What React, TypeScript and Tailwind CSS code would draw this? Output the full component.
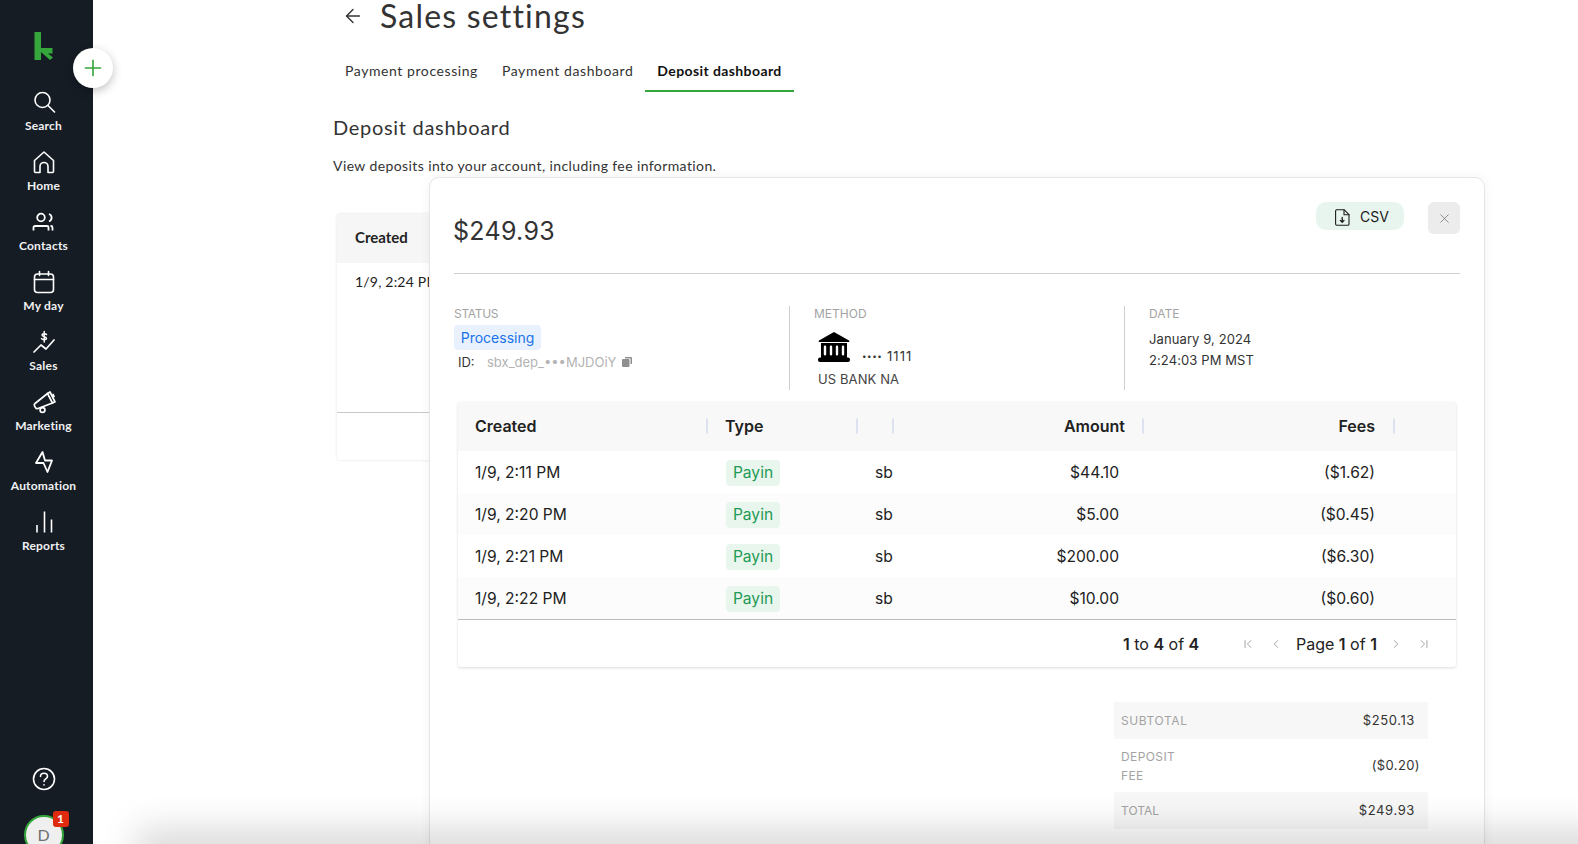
import React from 'react';
import { ArrowLeft, ChevronLeft, ChevronRight, ChevronFirst, ChevronLast, Plus, X } from 'lucide-react';

const lato = 'font-["Lato","Liberation_Sans",sans-serif]';
const inter = 'font-["Inter","Liberation_Sans",sans-serif]';

const SearchIcon = () => (
  <svg width="24" height="24" viewBox="0 0 24 24" fill="none" stroke="white" strokeWidth="1.6" strokeLinecap="round">
    <circle cx="10.5" cy="10" r="7.5" />
    <path d="M16 15.5l6.5 6.5" />
  </svg>
);
const HomeIcon = () => (
  <svg width="24" height="24" viewBox="0 0 24 24" fill="none" stroke="white" strokeWidth="1.6" strokeLinejoin="round">
    <path d="M2.5 10.5L12 2l9.5 8.5V21.5a1 1 0 0 1-1 1H16v-6a4 4 0 0 0-8 0v6H3.500a1 1 0 0 1-1-1z" />
  </svg>
);
const ContactsIcon = () => (
  <svg width="24" height="24" viewBox="0 0 24 24" fill="none" stroke="white" strokeWidth="1.8">
    <circle cx="9" cy="7.500" r="3.800" />
    <path d="M1.500 20.500v-3a1.500 1.500 0 0 1 1.500-1.500h12a1.500 1.500 0 0 1 1.500 1.500v3" />
    <path d="M17 4a4 4 0 0 1 0 7.500" />
    <path d="M18.500 16h.5a1.500 1.500 0 0 1 1.500 1.500v3" />
  </svg>
);
const CalendarIcon = () => (
  <svg width="24" height="24" viewBox="0 0 24 24" fill="none" stroke="white" strokeWidth="1.6" strokeLinecap="round">
    <rect x="2.500" y="4" width="19" height="18.500" rx="3" />
    <path d="M2.500 9.500h19M7.500 1.500v4M16.500 1.500v4" />
  </svg>
);
const SalesIcon = () => (
  <svg width="24" height="24" viewBox="0 0 24 24" fill="none" stroke="white" strokeWidth="1.7" strokeLinecap="round" strokeLinejoin="round">
    <path d="M2 22l7-7 5 4 8-9" />
    <path d="M14.500 4.500c-.6-1-4.400-1.300-4.500.6-.1 1.900 4.700 1.300 4.500 3.300-.2 1.800-4 1.500-5 .2M12.200 1.500v10.500" strokeWidth="1.500" />
  </svg>
);
const MarketingIcon = () => (
  <svg width="24" height="24" viewBox="0 0 24 24" fill="none" stroke="white" strokeWidth="1.7" strokeLinecap="round" strokeLinejoin="round">
    <path d="M3 13.500L15.500 3.500 20.500 13 6 18.500a2 2 0 0 1-2.500-.9l-1-1.800a1.800 1.800 0 0 1 .5-2.300z" />
    <path d="M15.500 3.500l2.500-1.500 5 9.800-2.500 1.200" />
    <circle cx="10.500" cy="20" r="2.400" />
    <path d="M21 4.500l1 2" />
  </svg>
);
const BoltIcon = () => (
  <svg width="24" height="24" viewBox="0 0 24 24" fill="none" stroke="white" strokeWidth="1.8" strokeLinejoin="round">
    <path d="M10.500 2L4 13h7.500L15.500 22 20 10.500h-7z" />
  </svg>
);
const ReportsIcon = () => (
  <svg width="24" height="24" viewBox="0 0 24 24" fill="none" stroke="white" strokeWidth="1.6">
    <path d="M5 15v7.500M12.500 1.500v21M19.500 9.500v13" />
  </svg>
);
const HelpIcon = () => (
  <svg width="24" height="24" viewBox="0 0 24 24" fill="none" stroke="white" strokeWidth="1.6" strokeLinecap="round">
    <circle cx="12" cy="12" r="10.500" />
    <path d="M8.500 9.500c0-2 1.500-3.200 3.500-3.200s3.500 1.300 3.500 3c0 2.500-3.500 2.700-3.500 5.200" />
    <path d="M12 17.800v.2" />
  </svg>
);
const BankIcon = () => (
  <svg width="32" height="30" viewBox="0 0 32 30" fill="black">
    <path d="M16 0L31 8.500a1 1 0 0 1 0 1.500H1a1 1 0 0 1 0-1.500z" />
    <path fillRule="evenodd" d="M3 11h26v15H3zM7 13.500a1.200 1.200 0 0 0-1.200 1.200v7.600a1.200 1.200 0 0 0 2.400 0v-7.600A1.200 1.200 0 0 0 7 13.500zm6 0a1.200 1.200 0 0 0-1.200 1.200v7.600a1.200 1.200 0 0 0 2.400 0v-7.600a1.200 1.200 0 0 0-1.200-1.200zm6 0a1.200 1.200 0 0 0-1.200 1.200v7.600a1.200 1.200 0 0 0 2.400 0v-7.600a1.200 1.200 0 0 0-1.200-1.200zm6 0a1.200 1.200 0 0 0-1.200 1.200v7.600a1.200 1.200 0 0 0 2.400 0v-7.600a1.200 1.200 0 0 0-1.200-1.200z" />
    <rect x="0" y="25.500" width="32" height="4.500" rx="2" />
  </svg>
);
const FileDownIcon = () => (
  <svg width="15" height="17" viewBox="0 0 15 17" fill="none" stroke="#1c1c1c" strokeWidth="1.100" strokeLinejoin="round" strokeLinecap="round">
    <path d="M1.500.7h7.500l5 5v9.300a1.300 1.300 0 0 1-1.300 1.300H1.800A1.300 1.300 0 0 1 .6 15V2A1.300 1.300 0 0 1 1.500.7z" />
    <path d="M9 .7v5h5" />
    <path d="M7.200 8.500v4.500M5.400 11.400l1.800 1.900 1.800-1.900" strokeWidth="1.300" />
  </svg>
);

const navItems = [
  { label: 'Search', icon: <SearchIcon /> },
  { label: 'Home', icon: <HomeIcon /> },
  { label: 'Contacts', icon: <ContactsIcon /> },
  { label: 'My day', icon: <CalendarIcon /> },
  { label: 'Sales', icon: <SalesIcon /> },
  { label: 'Marketing', icon: <MarketingIcon /> },
  { label: 'Automation', icon: <BoltIcon /> },
  { label: 'Reports', icon: <ReportsIcon /> },
];

const rows = [
  { created: '1/9, 2:11 PM', amount: '$44.10', fees: '($1.62)' },
  { created: '1/9, 2:20 PM', amount: '$5.00', fees: '($0.45)' },
  { created: '1/9, 2:21 PM', amount: '$200.00', fees: '($6.30)' },
  { created: '1/9, 2:22 PM', amount: '$10.00', fees: '($0.60)' },
];

const Sep = () => <span className="absolute right-0 top-1/2 h-[15px] w-[2px] -translate-y-1/2 bg-[#dde2f0]" />;

const Sidebar = () => (
  <aside className={`relative z-10 flex h-full w-[93px] shrink-0 flex-col items-center bg-[#151c24] pr-[6px] ${lato}`}>
    <svg className="mt-[32px] mb-[30px]" width="20" height="28" viewBox="0 0 20 28" fill="#35a63b">
      <path d="M.5 0H7v16h11.500v5.500H14l5 4-3 2.500-9-8v8H.5z" />
    </svg>
    {navItems.map((item) => (
      <div key={item.label} className="flex h-[60px] w-full flex-col items-center">
        <div className="flex h-[24px] items-center justify-center">{item.icon}</div>
        <span className="mt-[4px] text-[12px] leading-[16px] font-bold tracking-[0.2px] text-[#f0f1f2]">{item.label}</span>
      </div>
    ))}
    <div className="mt-auto mb-[-11px] flex flex-col items-center">
      <HelpIcon />
      <div className="relative mt-[24px] flex h-[40px] w-[40px] items-center justify-center rounded-full border-2 border-[#35a63b] bg-[#efefef] text-[16px] text-[#6f6f6f]">
        D
        <span className="absolute top-[-6px] right-[-7px] flex h-[16px] w-[16px] items-center justify-center rounded-[3px] bg-[#e02b10] text-[12px] leading-none font-bold text-white">1</span>
      </div>
    </div>
    <button className="absolute top-[48px] left-[73px] flex h-[40px] w-[40px] items-center justify-center rounded-full bg-white shadow-[0_3px_10px_rgba(0,0,0,0.25)]">
      <Plus size={26} strokeWidth={1.5} color="#35a63b" />
    </button>
  </aside>
);

const Background = () => (
  <main className={`flex-1 pl-[240px] ${lato}`}>
    <div className="flex h-[32px] items-center text-[#333]">
      <ArrowLeft size={22} strokeWidth={1.5} className="ml-[9px]" />
      <h1 className="ml-[16px] text-[32px] leading-[32px] tracking-[1.2px] text-[#333]">Sales settings</h1>
    </div>
    <div className="mt-[21px] flex h-[39px] text-[14px] tracking-[0.58px]">
      <div className="px-[12px] pt-[7px] text-[#333]">Payment processing</div>
      <div className="px-[12px] pt-[7px] text-[#333]">Payment dashboard</div>
      <div className="border-b-2 border-[#35a63b] px-[12px] pt-[7px] font-bold tracking-[0.4px] text-[#111]">Deposit dashboard</div>
    </div>
    <h2 className="mt-[21px] text-[20px] leading-[28px] tracking-[0.7px] text-[#333]">Deposit dashboard</h2>
    <p className="mt-[15px] text-[14px] leading-[20px] tracking-[0.4px] text-[#333]">View deposits into your account, including fee information.</p>
    <div className="mt-[38px] ml-[4px] h-[246px] w-[400px] rounded-[3px] shadow-[0_0_3px_rgba(0,0,0,0.12)]">
      <div className="flex h-[49px] items-center bg-[#f6f6f6] pb-[2px] pl-[18px] text-[15px] font-bold text-[#222]">Created</div>
      <div className="flex h-[150px] border-b border-[#c8c8c8] pt-[8px] pl-[18px] text-[14px] tracking-[0.2px] text-[#222]">1/9, 2:24 PM</div>
    </div>
  </main>
);

const Panel = () => (
  <section className={`absolute top-[177px] left-[429px] h-[700px] w-[1056px] rounded-[10px] border border-[#e6e6e6] bg-white px-[24px] shadow-[0_0_12px_rgba(0,0,0,0.05)] ${inter}`}>
    <div className="flex h-[96px] items-start justify-between border-b border-[#cfcfcf]">
      <div className="mt-[34px] ml-[-1px] text-[25px] leading-[38px] tracking-[0.3px] text-[#333]">$249.93</div>
      <div className="mt-[24px] flex items-start">
        <button className="flex h-[28px] w-[88px] items-center rounded-[10px] bg-[#e8f5ee] pl-[19px] text-[14px] text-[#1c1c1c]">
          <span className="mt-[2px]"><FileDownIcon /></span>
          <span className="ml-[10px]">CSV</span>
        </button>
        <button className="ml-[24px] flex h-[32px] w-[32px] items-center justify-center rounded-[6px] bg-[#ececec]">
          <X size={15} strokeWidth={1.1} color="#666" />
        </button>
      </div>
    </div>

    <div className="mt-[32px] flex h-[84px]">
      <div className="w-[335px]">
        <div className="mt-[1px] text-[12px] leading-[14px] tracking-[-0.3px] text-[#a3a3a3]">STATUS</div>
        <span className="mt-[4px] inline-block h-[25px] w-[87px] rounded-[4px] bg-[#e8f1fd] text-center text-[14px] leading-[25px] text-[#1a73e8]">Processing</span>
        <div className="mt-[3px] flex items-center pl-[4px] text-[13px] leading-[18px]">
          <span className="w-[29px] text-[#333]">ID:</span>
          <span className="text-[#b3b3b3]">sbx_dep_•••MJDOiY</span>
          <svg className="ml-[6px]" width="10" height="10" viewBox="0 0 10 10" fill="#8f8f8f">
            <rect x="0" y="2" width="7.500" height="8" rx="1" />
            <path d="M3 0h6a1 1 0 0 1 1 1v6H8.500V1.500H3z" />
          </svg>
        </div>
      </div>
      <div className="w-[335px] border-l border-[#cfcfcf] pl-[24px]">
        <div className="mt-[1px] text-[12px] leading-[14px] text-[#a3a3a3]">METHOD</div>
        <div className="mt-[11px] ml-[4px] flex items-end">
          <BankIcon />
          <span className="mb-[-5px] ml-[12px] text-[13px] leading-[18px] tracking-[1px] text-[#333]">
            <span className="inline-block -translate-y-[2px] text-[8px] tracking-[0.6px]">••••</span> 1111
          </span>
        </div>
        <div className="mt-[8px] ml-[4px] text-[13px] leading-[18px] tracking-[0.1px] text-[#444]">US BANK NA</div>
      </div>
      <div className="flex-1 border-l border-[#cfcfcf] pl-[24px]">
        <div className="mt-[1px] text-[12px] leading-[14px] text-[#a3a3a3]">DATE</div>
        <div className="mt-[8px] text-[13px] leading-[21px] tracking-[0.1px] text-[#333]">January 9, 2024<br />2:24:03 PM MST</div>
      </div>
    </div>

    <div className="mt-[12px] ml-[4px] w-[998px] rounded-[3px] text-[16px] text-[#222] shadow-[0_1px_3px_rgba(0,0,0,0.14)]">
      <div className="grid h-[49px] grid-cols-[250px_150px_36px_250px_251px_1fr] items-center bg-[#f8f8f8] pb-[2px] font-semibold">
        <div className="relative flex h-full items-center pl-[17px]">Created<Sep /></div>
        <div className="relative flex h-full items-center pl-[17px]">Type<Sep /></div>
        <div className="relative h-full"><Sep /></div>
        <div className="relative flex h-full items-center justify-end pr-[19px]">Amount<Sep /></div>
        <div className="relative flex h-full items-center justify-end pr-[20px]">Fees<Sep /></div>
        <div />
      </div>
      {rows.map((row, i) => (
        <div key={row.created} className={`grid h-[42px] grid-cols-[250px_150px_36px_250px_251px_1fr] items-center text-[15.6px] ${i % 2 ? 'bg-[#fcfcfc]' : 'bg-white'}`}>
          <div className="mt-[2px] pl-[17px]">{row.created}</div>
          <div className="mt-[1px] pl-[18px]">
            <span className="inline-block h-[26px] w-[54px] rounded-[4px] bg-[#e9f6ee] text-center leading-[26px] text-[#1f9a54]">Payin</span>
          </div>
          <div className="mt-[2px] pl-[17px]">sb</div>
          <div className="mt-[2px] pr-[25px] text-right">{row.amount}</div>
          <div className="mt-[2px] pr-[20px] text-right">{row.fees}</div>
          <div />
        </div>
      ))}
      <div className="flex h-[48px] items-center border-t border-[#bdbdbd] pl-[665px]">
        <span className="w-[118px] shrink-0"><b className="font-semibold">1</b> to <b className="font-semibold">4</b> of <b className="font-semibold">4</b></span>
        <ChevronFirst size={14} strokeWidth={1.3} color="#888" className="shrink-0" />
        <ChevronLeft size={14} strokeWidth={1.3} color="#888" className="ml-[14px] shrink-0" />
        <span className="ml-[13px] shrink-0 whitespace-nowrap">Page <b className="font-semibold">1</b> of <b className="font-semibold">1</b></span>
        <ChevronRight size={14} strokeWidth={1.3} color="#888" className="ml-[12px] shrink-0" />
        <ChevronLast size={14} strokeWidth={1.3} color="#888" className="ml-[14px] shrink-0" />
      </div>
    </div>

    <div className="mt-[35px] ml-[660px] w-[314px] text-[13px] text-[#333]">
      <div className="flex h-[37px] items-center justify-between bg-[#f7f7f7] pr-[13px] pl-[7px]">
        <span className="text-[12px] tracking-[0.6px] text-[#a3a3a3]">SUBTOTAL</span>
        <span className="tracking-[0.6px]">$250.13</span>
      </div>
      <div className="flex h-[53px] items-center justify-between pr-[8px] pl-[7px]">
        <span className="text-[12px] leading-[19px] tracking-[0.4px] text-[#a3a3a3]">DEPOSIT<br />FEE</span>
        <span className="tracking-[0.4px]">($0.20)</span>
      </div>
      <div className="flex h-[37px] items-center justify-between bg-[#f7f7f7] pr-[13px] pl-[7px]">
        <span className="text-[12px] text-[#a3a3a3]">TOTAL</span>
        <span className="tracking-[0.6px]">$249.93</span>
      </div>
    </div>
  </section>
);

export default function App() {
  return (
    <div className="relative flex h-[844px] w-full overflow-hidden bg-white">
      <Sidebar />
      <Background />
      <Panel />
      {/* shadow of whatever sits just below the fold */}
      <div className="absolute right-[-40px] bottom-[-12px] left-[150px] z-20 h-[12px] shadow-[0_0_36px_14px_rgba(0,0,0,0.16)]" />
    </div>
  );
}
